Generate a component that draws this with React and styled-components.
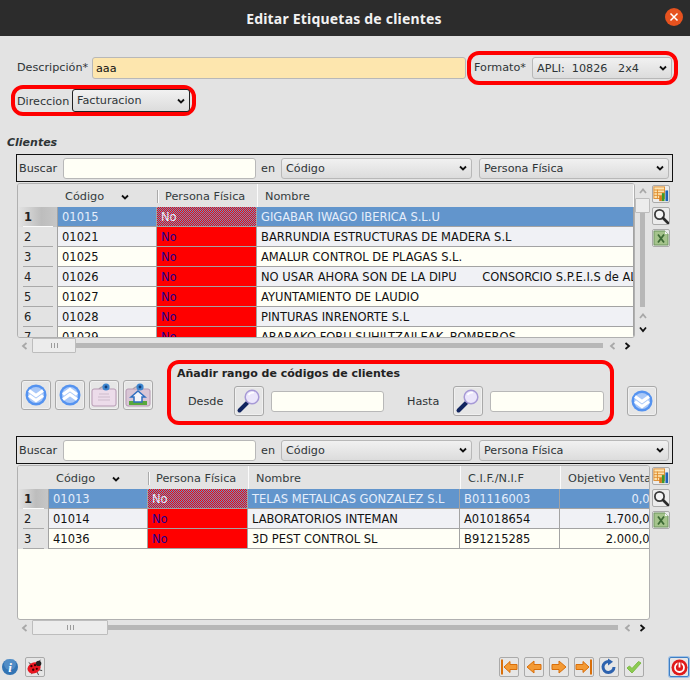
import React from 'react'
import styled, { createGlobalStyle } from 'styled-components'

const GlobalStyle = createGlobalStyle`
  html, body {
    margin: 0;
    padding: 0;
    background: #e3e3e3;
  }
  * {
    box-sizing: border-box;
  }
`

const Page = styled.div`
  width: 690px;
  height: 680px;
  overflow: hidden;
  display: flex;
  flex-direction: column;
  background: #e3e3e3;
  color: #2e3436;
  font-family: 'DejaVu Sans', sans-serif;
  font-size: 11.2px;
`

const TitleBar = styled.header`
  height: 36px;
  flex: none;
  position: relative;
  display: flex;
  align-items: center;
  justify-content: center;
  padding-right: 2px;
  background: #2c2c2c;
  color: #f2f2f2;
  font-family: 'Noto Sans', sans-serif;
  font-weight: 700;
  font-size: 14px;
  letter-spacing: 0.2px;
`

const CloseButton = styled.button`
  position: absolute;
  right: 7px;
  top: 8px;
  width: 18px;
  height: 18px;
  padding: 0;
  border: 0;
  border-radius: 50%;
  background: #e6521f;
  display: flex;
  align-items: center;
  justify-content: center;
`

const FormRow = styled.div`
  display: flex;
  align-items: center;
  height: ${p => p.$h}px;
  margin-top: ${p => p.$top || 0}px;
  padding-left: ${p => p.$left || 0}px;
`

const Label = styled.label`
  flex: none;
  width: ${p => (p.$w ? `${p.$w}px` : 'auto')};
  margin-left: ${p => p.$ml || 0}px;
  margin-top: ${p => p.$down || 0}px;
  margin-bottom: ${p => p.$raise || 0}px;
  white-space: pre;
`

const Input = styled.input`
  flex: none;
  width: ${p => p.$w}px;
  height: ${p => p.$h || 21}px;
  padding: 0 3px;
  border: 1px solid #b8b8b8;
  border-radius: 3px;
  background: ${p => p.$bg || '#fffff6'};
  color: #111;
  font: inherit;
  outline: none;
`

const RedBox = styled.div`
  display: flex;
  align-items: center;
  border: 4px solid #ff0000;
  border-radius: 12px;
`

const FormatBox = styled(RedBox)`
  width: 211px;
  height: 34px;
  margin-left: 1px;
  padding-left: 3px;
`

const AddressBox = styled(RedBox)`
  width: 185px;
  height: 31px;
  margin-left: 11px;
  padding-left: 2px;
`

const SelectWrap = styled.div`
  position: relative;
  flex: none;
  width: ${p => p.$w}px;
  height: ${p => p.$h || 21}px;
  margin-left: ${p => p.$ml || 0}px;
`

const SelectBox = styled.select`
  appearance: none;
  width: 100%;
  height: 100%;
  padding: 0 0 0 4px;
  border: 1px solid ${p => (p.$dark ? '#222' : '#b8b8b8')};
  border-radius: 3px;
  background: linear-gradient(#f1f1f1, #dcdcdc);
  color: #2e3436;
  font: inherit;
  outline: none;
`

const Chevron = styled.svg`
  position: absolute;
  right: ${p => p.$right || 5}px;
  top: 50%;
  width: 8px;
  height: 6px;
  margin-top: -3px;
  pointer-events: none;
`

const ChevronDown = ({ right }) => (
  <Chevron $right={right} viewBox="0 0 8 6">
    <path d="M1 1.5 L4 4.5 L7 1.5" fill="none" stroke="#111" strokeWidth="1.8" />
  </Chevron>
)

const Select = ({ w, h, ml, dark, value }) => (
  <SelectWrap $w={w} $h={h} $ml={ml}>
    <SelectBox $dark={dark} defaultValue={value}>
      <option>{value}</option>
    </SelectBox>
    <ChevronDown />
  </SelectWrap>
)

const SectionTitle = styled.div`
  margin: 20px 0 0 7px;
  height: 18px;
  line-height: 13px;
  font-weight: 700;
  font-style: italic;
  font-size: 11px;
`

const SearchBar = styled.div`
  display: flex;
  align-items: center;
  width: 657px;
  height: 28px;
  margin-top: ${p => p.$top || 0}px;
  margin-left: 16px;
  padding-left: 2px;
  border: 1px solid #111;
`

const GridRow = styled.div`
  display: flex;
  align-items: flex-start;
  margin: 1px 0 0 17px;
`

const GridBox = styled.div`
  width: ${p => p.$w}px;
  height: 155px;
  flex: none;
  overflow: hidden;
  border: 1px solid #b0b0b0;
  border-radius: 3px;
  background: ${p => p.$bg || '#e3e3e3'};
  display: flex;
  flex-direction: column;
  font-size: 11.5px;
`

const Line = styled.div`
  display: flex;
  flex: none;
  height: ${p => p.$h || 20}px;
`

const Corner = styled.div`
  flex: none;
  width: ${p => p.$w}px;
  background: #e3e3e3;
`

const HeadCell = styled.div`
  position: relative;
  flex: none;
  width: ${p => p.$w}px;
  display: flex;
  align-items: center;
  padding: 2px 0 0 ${p => p.$pad || 7}px;
  white-space: pre;
  overflow: ${p => (p.$short ? 'visible' : 'hidden')};
  color: #333b3d;
  font-size: 11.3px;
  background: #e3e3e3;
  border-right: ${p => (p.$short ? '0' : '1px solid #fbfbfb')};
  ${p =>
    p.$short &&
    `&::after {
      content: '';
      position: absolute;
      z-index: 1;
      right: -1px;
      top: 6px;
      bottom: 4px;
      width: 2px;
      background: linear-gradient(to right, #aaa 50%, #fbfbfb 50%);
    }`}
`

const SortMark = styled.svg`
  width: 8px;
  height: 6px;
  margin-left: 17px;
`

const RowHead = styled.div`
  position: relative;
  flex: none;
  width: ${p => p.$w}px;
  padding-left: 6px;
  line-height: 21px;
  color: #222;
  font-weight: ${p => (p.$sel ? 700 : 400)};
  background: ${p => (p.$sel ? 'linear-gradient(to right, #e3e3e3 0, #bdbdbd 60%, #c6c6c6 100%)' : '#e3e3e3')};
  &::after {
    content: '';
    position: absolute;
    left: 5px;
    right: 4px;
    bottom: 0;
    height: 1px;
    background: ${p => (p.$sel ? '#fbfbfb' : '#a9a9a9')};
  }
`

const Cell = styled.div`
  flex: none;
  width: ${p => p.$w}px;
  padding: 0 4px;
  line-height: 21px;
  white-space: pre;
  overflow: hidden;
  text-align: ${p => (p.$right ? 'right' : 'left')};
  border-right: 1px solid #a3a3a3;
  border-bottom: 1px solid #a3a3a3;
  color: ${p => (p.$sel ? '#e6eefb' : p.$red ? '#1f0090' : '#111')};
  background: ${p => (p.$bg ? p.$bg : '#fffff6')};
  ${p =>
    p.$sel &&
    p.$red &&
    `background: repeating-conic-gradient(#ff0000 0 25%, #6295cc 0 50%) 0 0 / 2px 2px;`}
  ${p => p.$clip && `padding-right: 0; text-overflow: clip;`}
  ${p => p.$first && `border-left: 1px solid #a3a3a3;`}
`

const SideTools = styled.div`
  display: flex;
  flex-direction: column;
  gap: 4px;
  margin: 2px 0 0 2px;
`

const ToolButton = styled.button`
  width: 18px;
  height: 18px;
  padding: 0;
  border: 1px solid #aaa;
  border-radius: 2px;
  background: #ececec;
  display: flex;
  align-items: center;
  justify-content: center;
`

const VScroll = styled.div`
  flex: none;
  width: 15px;
  height: 154px;
  display: flex;
  flex-direction: column;
  align-items: center;
`

const VThumb = styled.div`
  width: 15px;
  height: 15px;
  flex: none;
  background: #ececec;
  border: 1px solid #bdbdbd;
  border-radius: 1px;
`

const VTrack = styled.div`
  width: 5px;
  height: 94px;
  flex: none;
  background: #b7b7b7;
`

const Arrow = styled.svg`
  flex: none;
  width: ${p => p.$w || 8}px;
  height: ${p => p.$h || 8}px;
  margin: ${p => p.$m || 0};
`

const arrowPaths = {
  up: 'M1 6 L4 2.5 L7 6',
  down: 'M1 2.5 L4 6 L7 2.5',
  left: 'M5.5 1 L2 4 L5.5 7',
  right: 'M2.5 1 L6 4 L2.5 7',
}

const ScrollArrow = ({ dir, dark, m }) => (
  <Arrow viewBox="0 0 8 8" $m={m}>
    <path d={arrowPaths[dir]} fill="none" stroke={dark ? '#111' : '#a8a8a8'} strokeWidth="1.8" />
  </Arrow>
)

const HScroll = styled.div`
  display: flex;
  align-items: center;
  height: ${p => p.$h}px;
  margin-left: 21px;
`

const HThumb = styled.div`
  flex: none;
  width: ${p => p.$w}px;
  height: 15px;
  display: flex;
  align-items: center;
  justify-content: center;
  background: #ececec;
  border: 1px solid #bdbdbd;
  border-radius: 1px;
`

const Grip = styled.div`
  width: 7px;
  height: 5px;
  background: repeating-linear-gradient(to right, #9c9c9c 0 1px, transparent 1px 3px);
`

const HTrack = styled.div`
  flex: none;
  width: ${p => p.$w}px;
  height: 5px;
  background: #b7b7b7;
`

const MiddleRow = styled.div`
  display: flex;
  align-items: center;
  height: 65px;
  margin-top: ${p => p.$top}px;
  padding-left: 21px;
`

const ActionGroup = styled.div`
  display: flex;
  gap: 4px;
  margin-top: 5px;
`

const IconButton = styled.button`
  flex: none;
  width: 30px;
  height: 30px;
  padding: 0;
  border: 1px solid #a9a9a9;
  border-radius: 3px;
  background: #e6e6e6;
  box-shadow: inset 0 0 0 1px #f0f0f0;
  display: flex;
  align-items: center;
  justify-content: center;
`

const RangeBox = styled(RedBox)`
  width: 447px;
  height: 65px;
  margin-left: 14px;
  display: block;
  padding: 3px 0 0 6px;
`

const RangeTitle = styled.div`
  height: 14px;
  line-height: 14px;
  font-weight: 700;
  font-size: 11px;
  color: #222;
`

const RangeFields = styled.div`
  display: flex;
  align-items: center;
  margin-top: 5px;
`

const RangeLabel = styled.span`
  width: ${p => p.$w}px;
  padding-left: ${p => p.$pad}px;
  flex: none;
`

const SmallButton = styled(IconButton)`
  margin-right: 7px;
`

const SideAdd = styled(IconButton)`
  margin: 17px 0 0 13px;
`

const Footer = styled.footer`
  margin-top: auto;
  height: 23px;
  padding: 0 1px 3px 2px;
  display: flex;
  align-items: center;
`

const InfoIcon = styled.div`
  width: 16px;
  height: 16px;
  margin-right: 7px;
`

const NavButton = styled.button`
  flex: none;
  width: 20px;
  height: 20px;
  padding: 0;
  border: 1px solid ${p => (p.$focus ? '#3f7fc4' : '#aaa')};
  border-radius: 2px;
  background: #e6e6e6;
  display: flex;
  align-items: center;
  justify-content: center;
  ${p => p.$focus && 'box-shadow: 0 0 0 1px #9dc0e6;'}
`

const NavGroup = styled.div`
  display: flex;
  gap: 5px;
  margin-left: auto;
  margin-right: 25px;
`

const BugButton = styled.button`
  width: 20px;
  height: 20px;
  padding: 0;
  border: 1px solid #aaa;
  border-radius: 2px;
  background: #e6e6e6;
  display: flex;
  align-items: center;
  justify-content: center;
`

/* ---- icons ---- */

const RoundChevrons = ({ up }) => (
  <svg width="24" height="24" viewBox="0 0 24 24">
    <circle cx="12" cy="12" r="10.5" fill="#5593f0" />
    <circle cx="12" cy="12" r="8" fill="#a9c8f8" />
    <g fill="none" stroke="#fff" strokeWidth="3.2" transform={up ? 'rotate(180 12 12)' : undefined}>
      <path d="M5 7.5 L12 12.5 L19 7.5" />
      <path d="M5 12.5 L12 17.5 L19 12.5" />
    </g>
  </svg>
)

const LabelSheet = ({ house }) => (
  <svg width="26" height="26" viewBox="0 0 26 26">
    <path d="M8 7 Q13 2 18 7" fill="none" stroke="#a8a0a8" strokeWidth="1.5" />
    <rect x="1" y="7" width="24" height="17" rx="2" fill={house ? '#d9c6d6' : '#ecdcea'} stroke="#b79ab4" />
    {house ? (
      <g>
        <rect x="4" y="19" width="18" height="4" fill="#58a83c" />
        <path d="M6 15 L13 9 L20 15 L17 15 L17 20 L9 20 L9 15 Z" fill="#f5f5fa" stroke="#2f6fc0" strokeWidth="1.5" />
      </g>
    ) : (
      <g stroke="#cdbccc" strokeWidth="1">
        <path d="M8 12 H18" />
        <path d="M7 15 H19" />
        <path d="M7 18 H19" />
      </g>
    )}
    <circle cx="15" cy="5" r="3.6" fill="#3d86cf" />
    <circle cx="15" cy="5" r="1.4" fill="#123c78" />
  </svg>
)

const PurpleLens = () => (
  <svg width="26" height="26" viewBox="0 0 26 26">
    <path d="M11 15 L3.5 22.5" stroke="#10245e" strokeWidth="4" strokeLinecap="round" />
    <circle cx="16" cy="9" r="6.8" fill="#ebe6fb" stroke="#a79ad6" strokeWidth="1.5" />
    <path d="M12.5 7 Q14 4.5 18 4.5" fill="none" stroke="#fff" strokeWidth="1.5" />
  </svg>
)

const ReportIcon = () => (
  <svg width="18" height="18" viewBox="0 0 18 18">
    <rect x="1" y="1" width="12" height="13" fill="#fde3b0" stroke="#dd8a2a" />
    <path d="M1 4.5 H13 M1 7.5 H13 M1 10.5 H13 M5 4 V14" stroke="#dd8a2a" strokeWidth="1" />
    <rect x="7" y="11" width="3" height="6" fill="#d9791c" />
    <rect x="10" y="8" width="3" height="9" fill="#3f9a2c" />
    <rect x="14" y="5" width="3" height="12" fill="#1e62b8" />
  </svg>
)

const GlassIcon = () => (
  <svg width="16" height="16" viewBox="0 0 16 16">
    <circle cx="6.5" cy="6.5" r="4.6" fill="#f4f4f4" stroke="#3a3a3a" strokeWidth="1.8" />
    <path d="M10 10 L15 15" stroke="#2a2a2a" strokeWidth="2.6" strokeLinecap="round" />
  </svg>
)

const ExcelIcon = () => (
  <svg width="16" height="16" viewBox="0 0 16 16">
    <path d="M1 1 H12 L15 4 V15 H1 Z" fill="#a5c48c" stroke="#6f9560" />
    <path d="M12 1 L15 4 H12 Z" fill="#f4f4f4" />
    <path d="M5 4.5 L11 12.5 M11 4.5 L5 12.5" stroke="#3d6a35" strokeWidth="1.8" />
  </svg>
)

const NavArrow = ({ flip, bar }) => (
  <svg width="18" height="18" viewBox="0 0 18 18">
    <g transform={flip ? 'matrix(-1 0 0 1 18 0)' : undefined}>
      {bar && <rect x="1" y="1.5" width="2" height="15" fill="#d96f0a" />}
      <path
        d={bar ? 'M4 9 L10 3.5 V6.5 H17 V11.5 H10 V14.5 Z' : 'M2 9 L9 3 V6.5 H16 V11.5 H9 V15 Z'}
        fill="#f39a35"
        stroke="#d96f0a"
      />
    </g>
  </svg>
)

const RefreshIcon = () => (
  <svg width="18" height="18" viewBox="0 0 18 18">
    <path d="M14 9 A5.5 5.5 0 1 1 9 3.5" fill="none" stroke="#2d62ae" strokeWidth="3" />
    <path d="M8 0.5 L13 3.7 L8 7.5 Z" fill="#2d62ae" />
  </svg>
)

const CheckIcon = () => (
  <svg width="18" height="18" viewBox="0 0 18 18">
    <path d="M2 10 L7 15 L16 5 L13.5 3.5 L7 10.5 L4.5 8 Z" fill="#8ccb52" stroke="#7dbb45" />
  </svg>
)

const PowerIcon = () => (
  <svg width="17" height="17" viewBox="0 0 17 17">
    <circle cx="8.5" cy="8.5" r="8" fill="#e01a1a" />
    <circle cx="8.5" cy="8.5" r="4.5" fill="none" stroke="#fff" strokeWidth="1.8" />
    <path d="M8.5 3 V9" stroke="#e01a1a" strokeWidth="4" />
    <path d="M8.5 3.5 V8.5" stroke="#fff" strokeWidth="1.8" />
  </svg>
)

const Info = () => (
  <InfoIcon>
    <svg width="16" height="16" viewBox="0 0 16 16">
      <circle cx="8" cy="8" r="8" fill="#3274b4" />
      <circle cx="8" cy="5" r="6" fill="#6fa6d8" opacity="0.5" />
      <text x="8" y="13" textAnchor="middle" fill="#fff" fontFamily="Liberation Serif, serif" fontStyle="italic" fontWeight="700" fontSize="13">i</text>
    </svg>
  </InfoIcon>
)

const Ladybug = () => (
  <svg width="20" height="20" viewBox="0 0 20 20">
    <path d="M3 5 L7 8 M16 2 L13 6 M2 12 L6 12 M18 14 L14 13 M6 18 L8 15 M14 19 L12 15" stroke="#333" strokeWidth="1" />
    <ellipse cx="9" cy="11" rx="7.5" ry="6" fill="#e81620" transform="rotate(-25 9 11)" />
    <circle cx="14" cy="6" r="3" fill="#222" />
    <circle cx="6" cy="9" r="1.3" fill="#300" />
    <circle cx="10" cy="8" r="1.2" fill="#300" />
    <circle cx="8" cy="13" r="1.3" fill="#300" />
    <circle cx="12" cy="12" r="1.2" fill="#300" />
  </svg>
)

/* ---- data ---- */

const topRows = [
  ['01015', 'GIGABAR IWAGO IBERICA S.L.U'],
  ['01021', 'BARRUNDIA ESTRUCTURAS DE MADERA S.L'],
  ['01025', 'AMALUR CONTROL DE PLAGAS S.L.'],
  ['01026', 'NO USAR AHORA SON DE LA DIPU       CONSORCIO S.P.E.I.S de ALAVA'],
  ['01027', 'AYUNTAMIENTO DE LAUDIO'],
  ['01028', 'PINTURAS INRENORTE S.L'],
  ['01029', 'ARABAKO FORU SUHILTZAILEAK- BOMBEROS'],
]

const bottomRows = [
  ['01013', 'TELAS METALICAS GONZALEZ S.L', 'B01116003', '0,00'],
  ['01014', 'LABORATORIOS INTEMAN', 'A01018654', '1.700,00'],
  ['41036', '3D PEST CONTROL SL', 'B91215285', '2.000,00'],
]

const rowColor = (i, alt) => {
  if (i === 0) return '#6295cc'
  return i % 2 === 1 && alt ? '#f0f1f5' : '#fffff6'
}

const Search = ({ top }) => (
  <SearchBar $top={top}>
    <Label $w={44}>Buscar</Label>
    <Input $w={193} />
    <Label as="span" $ml={5}>en</Label>
    <Select w={191} ml={6} value="Código" />
    <Select w={190} ml={7} value="Persona Física" />
  </SearchBar>
)

const CodeHead = ({ w }) => (
  <HeadCell $w={w} $short $pad={8}>
    Código
    <SortMark viewBox="0 0 8 6">
      <path d="M1 1.5 L4 4.5 L7 1.5" fill="none" stroke="#111" strokeWidth="1.8" />
    </SortMark>
  </HeadCell>
)

const Tools = () => (
  <SideTools>
    <ToolButton><ReportIcon /></ToolButton>
    <ToolButton><GlassIcon /></ToolButton>
    <ToolButton><ExcelIcon /></ToolButton>
  </SideTools>
)

const App = () => (
  <Page>
    <GlobalStyle />
    <TitleBar>
      Editar Etiquetas de clientes
      <CloseButton>
        <svg width="10" height="10" viewBox="0 0 10 10">
          <path d="M1.5 1.5 L8.5 8.5 M8.5 1.5 L1.5 8.5" stroke="#fff" strokeWidth="1.5" />
        </svg>
      </CloseButton>
    </TitleBar>

    <FormRow $h={34} $top={15} $left={17}>
      <Label $w={75} $raise={2}>Descripción*</Label>
      <Input $w={374} $h={22} $bg="#fde6ae" defaultValue="aaa" />
      <FormatBox>
        <Label $w={58} $raise={2}>Formato*</Label>
        <Select w={140} h={22} value={'APLI:\u00a0\u00a010826\u00a0\u00a0\u00a02x4'} />
      </FormatBox>
    </FormRow>

    <FormRow $h={31}>
      <AddressBox>
        <Label $w={55} $down={2}>Direccion</Label>
        <Select w={118} h={23} dark value="Facturacion" />
      </AddressBox>
    </FormRow>

    <SectionTitle>Clientes</SectionTitle>
    <Search />

    <GridRow>
      <GridBox $w={618}>
        <Line $h={23}>
          <Corner $w={39} />
          <CodeHead w={101} />
          <HeadCell $w={100}>Persona Física</HeadCell>
          <HeadCell $w={376}>Nombre</HeadCell>
        </Line>
        {topRows.map((r, i) => (
          <Line key={r[0]}>
            <RowHead $w={39} $sel={i === 0}>{i + 1}</RowHead>
            <Cell $w={100} $first $sel={i === 0} $bg={rowColor(i, true)}>{r[0]}</Cell>
            <Cell $w={100} $red $sel={i === 0} $bg="#ff0000">No</Cell>
            <Cell $w={377} $clip $sel={i === 0} $bg={rowColor(i, true)}>{r[1]}</Cell>
          </Line>
        ))}
      </GridBox>
      <VScroll>
        <ScrollArrow dir="up" m="4px 0 3px" />
        <VThumb />
        <VTrack />
        <ScrollArrow dir="up" m="5px 0 5px" />
        <ScrollArrow dir="down" dark />
      </VScroll>
      <Tools />
    </GridRow>

    <HScroll $h={15}>
      <ScrollArrow dir="left" dark={false} m="0 3px 0 0" />
      <HThumb $w={44}><Grip /></HThumb>
      <HTrack $w={527} />
      <ScrollArrow dir="left" m="0 6px" />
      <ScrollArrow dir="right" dark />
    </HScroll>

    <MiddleRow $top={7}>
      <ActionGroup>
        <IconButton><RoundChevrons /></IconButton>
        <IconButton><RoundChevrons up /></IconButton>
        <IconButton><LabelSheet /></IconButton>
        <IconButton><LabelSheet house /></IconButton>
      </ActionGroup>
      <RangeBox>
        <RangeTitle>Añadir rango de códigos de clientes</RangeTitle>
        <RangeFields>
          <RangeLabel $w={57} $pad={11}>Desde</RangeLabel>
          <SmallButton><PurpleLens /></SmallButton>
          <Input $w={113} />
          <RangeLabel $w={69} $pad={23}>Hasta</RangeLabel>
          <SmallButton><PurpleLens /></SmallButton>
          <Input $w={114} />
        </RangeFields>
      </RangeBox>
      <SideAdd><RoundChevrons /></SideAdd>
    </MiddleRow>

    <Search top={11} />

    <GridRow>
      <GridBox $w={633} $bg="#fffff6">
        <Line $h={23}>
          <Corner $w={30} />
          <CodeHead w={101} />
          <HeadCell $w={100}>Persona Física</HeadCell>
          <HeadCell $w={212}>Nombre</HeadCell>
          <HeadCell $w={100}>C.I.F./N.I.F</HeadCell>
          <HeadCell $w={100}>Objetivo Ventas</HeadCell>
        </Line>
        {bottomRows.map((r, i) => (
          <Line key={r[0]}>
            <RowHead $w={30} $sel={i === 0}>{i + 1}</RowHead>
            <Cell $w={100} $first $sel={i === 0} $bg={rowColor(i, true)}>{r[0]}</Cell>
            <Cell $w={100} $red $sel={i === 0} $bg="#ff0000">No</Cell>
            <Cell $w={212} $sel={i === 0} $bg={rowColor(i, true)}>{r[1]}</Cell>
            <Cell $w={100} $sel={i === 0} $bg={rowColor(i, true)}>{r[2]}</Cell>
            <Cell $w={102} $right $sel={i === 0} $bg={rowColor(i, true)}>{r[3]}</Cell>
          </Line>
        ))}
      </GridBox>
      <Tools />
    </GridRow>

    <HScroll $h={15}>
      <ScrollArrow dir="left" dark={false} m="0 3px 0 0" />
      <HThumb $w={76}><Grip /></HThumb>
      <HTrack $w={510} />
      <ScrollArrow dir="left" m="0 6px" />
      <ScrollArrow dir="right" dark />
    </HScroll>

    <Footer>
      <Info />
      <BugButton><Ladybug /></BugButton>
      <NavGroup>
        <NavButton><NavArrow bar /></NavButton>
        <NavButton><NavArrow /></NavButton>
        <NavButton><NavArrow flip /></NavButton>
        <NavButton><NavArrow flip bar /></NavButton>
        <NavButton><RefreshIcon /></NavButton>
        <NavButton><CheckIcon /></NavButton>
      </NavGroup>
      <NavButton $focus><PowerIcon /></NavButton>
    </Footer>
  </Page>
)

export default App
